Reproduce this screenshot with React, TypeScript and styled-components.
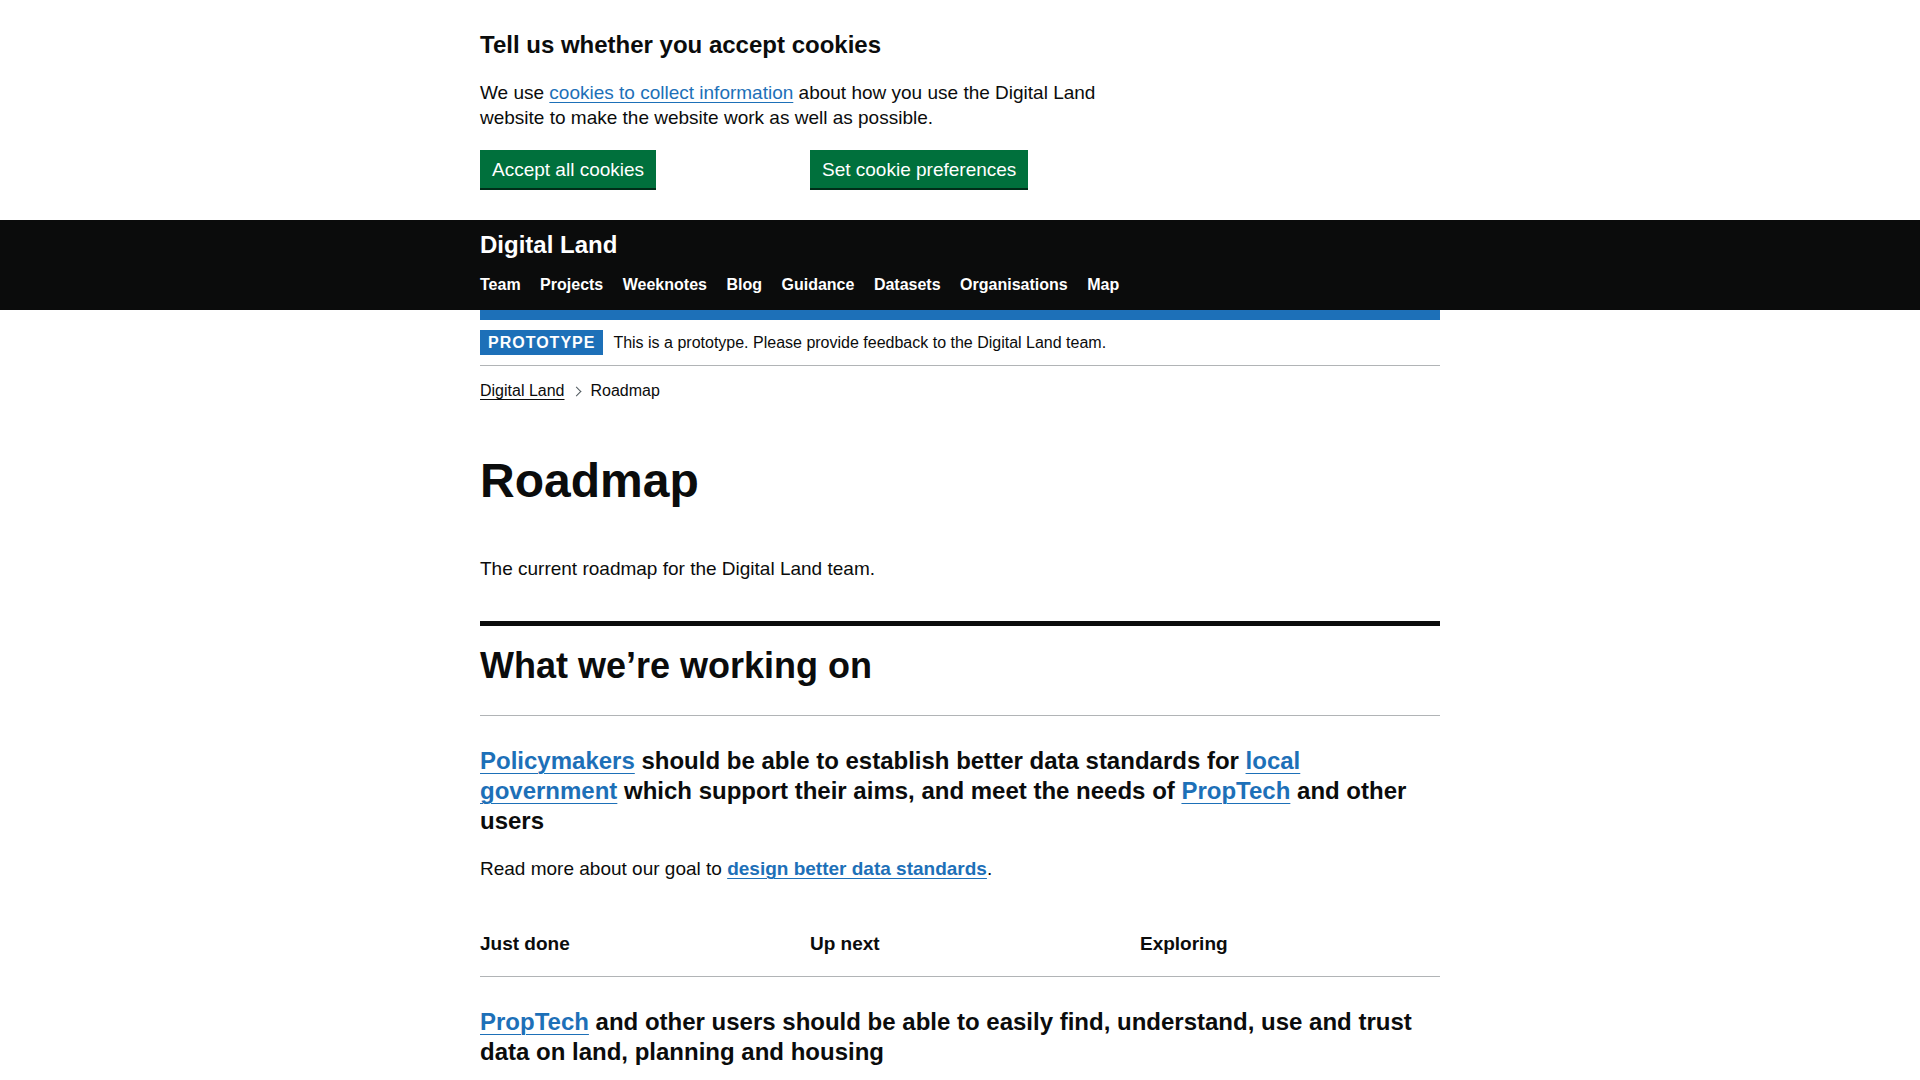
import React from "react";
import styled, { createGlobalStyle } from "styled-components";

const GlobalStyle = createGlobalStyle`
  html, body {
    margin: 0;
    padding: 0;
    background: #ffffff;
  }
  body {
    font-family: "Liberation Sans", Arial, Helvetica, sans-serif;
    color: #0b0c0c;
    -webkit-font-smoothing: antialiased;
  }
  * { box-sizing: border-box; }
`;

const Width = styled.div`
  width: 960px;
  margin: 0 auto;
`;

/* ---------- Cookie banner ---------- */
const CookieBanner = styled.div`
  padding-top: 30px;
  background: #ffffff;
`;

const CookieHeading = styled.h2`
  margin: 0 0 20px;
  font-size: 24px;
  line-height: 30px;
  font-weight: 700;
`;

const CookieText = styled.p`
  width: 630px;
  margin: 0 0 20px;
  font-size: 19px;
  line-height: 25px;
`;

const ThirdsGrid = styled.div`
  display: grid;
  grid-template-columns: repeat(3, 1fr);
  column-gap: 30px;
`;

const ButtonCell = styled.div`
  display: flex;
  align-items: flex-start;
`;

const GreenButton = styled.button`
  font-family: inherit;
  font-size: 19px;
  line-height: 19px;
  font-weight: 400;
  color: #ffffff;
  background: #00703c;
  border: 2px solid transparent;
  border-radius: 0;
  box-shadow: 0 2px 0 #002d18;
  padding: 8px 10px 7px;
  margin: 0 0 32px;
  cursor: pointer;
`;

const Link = styled.a<{ $bold?: boolean }>`
  color: #1d70b8;
  font-weight: ${(p) => (p.$bold ? 700 : "inherit")};
  text-decoration: underline;
  text-decoration-thickness: 1px;
  text-underline-offset: 0.1578em;
  cursor: pointer;
`;

/* ---------- Header ---------- */
const Header = styled.header`
  background: #0b0c0c;
  padding: 10px 0 15px;
`;

const Logo = styled.a`
  display: block;
  color: #ffffff;
  font-size: 24px;
  line-height: 30px;
  font-weight: 700;
  text-decoration: none;
`;

const Nav = styled.ul`
  display: flex;
  list-style: none;
  margin: 15px 0 0;
  padding: 0;
  column-gap: 19.5px;
`;

const NavItem = styled.li`
  font-size: 16px;
  line-height: 20px;
  font-weight: 700;
  color: #ffffff;
`;

const BlueBar = styled(Width)`
  height: 10px;
  background: #1d70b8;
`;

/* ---------- Phase banner ---------- */
const PhaseBanner = styled(Width)`
  display: flex;
  align-items: baseline;
  padding: 10px 0;
  border-bottom: 1px solid #b1b4b6;
`;

const Tag = styled.strong`
  display: inline-block;
  background: #1d70b8;
  color: #ffffff;
  font-size: 16px;
  line-height: 16px;
  font-weight: 700;
  letter-spacing: 1px;
  padding: 5px 8px 4px;
  margin-right: 10px;
  text-transform: uppercase;
`;

const PhaseText = styled.span`
  font-size: 16px;
  line-height: 20px;
`;

/* ---------- Breadcrumbs ---------- */
const Breadcrumbs = styled.ol`
  display: flex;
  align-items: center;
  list-style: none;
  margin: 15px 0 15px;
  padding: 0;
  font-size: 16px;
  line-height: 20px;
`;

const Crumb = styled.li`
  display: flex;
  align-items: center;
`;

const CrumbLink = styled.a`
  color: #0b0c0c;
  text-decoration: underline;
  text-decoration-thickness: 1px;
  text-underline-offset: 0.1578em;
`;

const Chevron = styled.span`
  display: inline-block;
  width: 7px;
  height: 7px;
  border-top: 1px solid #505a5f;
  border-right: 1px solid #505a5f;
  transform: rotate(45deg);
  margin: 1px 11px 0 8px;
`;

/* ---------- Main ---------- */
const Main = styled.main`
  padding: 40px 0 60px;
`;

const Title = styled.h1`
  margin: 0 0 50px;
  font-size: 48px;
  line-height: 50px;
  font-weight: 700;
`;

const Body = styled.p<{ $gap?: number }>`
  margin: 0 0 ${(p) => p.$gap ?? 20}px;
  font-size: 19px;
  line-height: 25px;
`;

const Section = styled.section`
  border-top: 5px solid #0b0c0c;
  padding-top: 20px;
`;

const SectionHeading = styled.h2`
  margin: 0 0 29px;
  font-size: 36px;
  line-height: 40px;
  font-weight: 700;
`;

const Rule = styled.hr`
  margin: 0;
  border: 0;
  border-top: 1px solid #b1b4b6;
`;

const Goal = styled.div`
  padding-top: 30px;
`;

const GoalHeading = styled.h3`
  margin: 0 0 20px;
  font-size: 24px;
  line-height: 30px;
  font-weight: 700;
`;

const ColumnHeading = styled.h4`
  margin: 0 0 20px;
  font-size: 19px;
  line-height: 25px;
  font-weight: 700;
`;

export default function App() {
  const nav = [
    "Team",
    "Projects",
    "Weeknotes",
    "Blog",
    "Guidance",
    "Datasets",
    "Organisations",
    "Map",
  ];

  return (
    <>
      <GlobalStyle />
      <CookieBanner>
        <Width>
          <CookieHeading>Tell us whether you accept cookies</CookieHeading>
          <CookieText>
            We use <Link>cookies to collect information</Link> about how you use the
            Digital Land website to make the website work as well as possible.
          </CookieText>
          <ThirdsGrid>
            <ButtonCell>
              <GreenButton>Accept all cookies</GreenButton>
            </ButtonCell>
            <ButtonCell>
              <GreenButton>Set cookie preferences</GreenButton>
            </ButtonCell>
          </ThirdsGrid>
        </Width>
      </CookieBanner>

      <Header>
        <Width>
          <Logo>Digital Land</Logo>
          <Nav>
            {nav.map((n) => (
              <NavItem key={n}>{n}</NavItem>
            ))}
          </Nav>
        </Width>
      </Header>
      <BlueBar />

      <PhaseBanner>
        <Tag>Prototype</Tag>
        <PhaseText>
          This is a prototype. Please provide feedback to the Digital Land team.
        </PhaseText>
      </PhaseBanner>

      <Width>
        <Breadcrumbs>
          <Crumb>
            <CrumbLink>Digital Land</CrumbLink>
            <Chevron />
          </Crumb>
          <Crumb>Roadmap</Crumb>
        </Breadcrumbs>

        <Main>
          <Title>Roadmap</Title>
          <Body $gap={40}>The current roadmap for the Digital Land team.</Body>

          <Section>
            <SectionHeading>What we’re working on</SectionHeading>
            <Rule />

            <Goal>
              <GoalHeading>
                <Link>Policymakers</Link> should be able to establish better data
                standards for <Link>local government</Link> which support their aims,
                and meet the needs of <Link>PropTech</Link> and other users
              </GoalHeading>
              <Body $gap={50}>
                Read more about our goal to{" "}
                <Link $bold>design better data standards</Link>.
              </Body>
              <ThirdsGrid>
                <ColumnHeading>Just done</ColumnHeading>
                <ColumnHeading>Up next</ColumnHeading>
                <ColumnHeading>Exploring</ColumnHeading>
              </ThirdsGrid>
              <Rule />
            </Goal>

            <Goal>
              <GoalHeading>
                <Link>PropTech</Link> and other users should be able to easily find,
                understand, use and trust data on land, planning and housing
              </GoalHeading>
              <Body $gap={50}>
                Read more about our goal to{" "}
                <Link $bold>make land and housing data easier to find, use and trust</Link>.
              </Body>
            </Goal>
          </Section>
        </Main>
      </Width>
    </>
  );
}
